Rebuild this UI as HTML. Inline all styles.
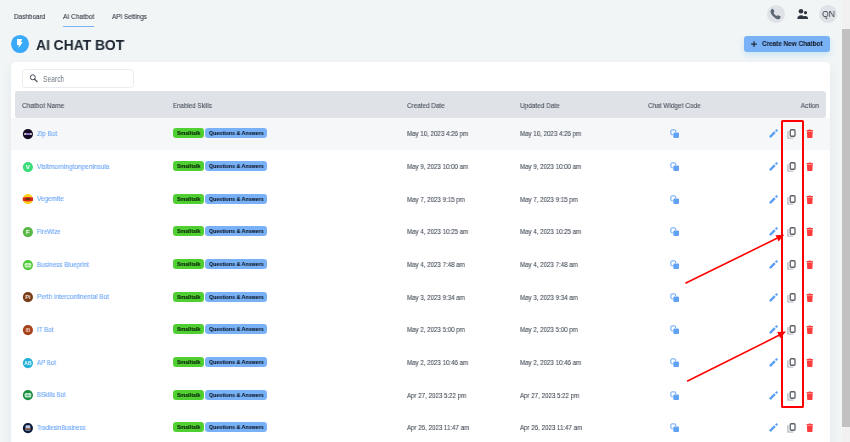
<!DOCTYPE html>
<html><head><meta charset="utf-8"><style>
html,body{margin:0;padding:0;width:850px;height:442px;overflow:hidden;background:#f2f5f6}
body{position:relative;font-family:"Liberation Sans", sans-serif}
.t{position:absolute;white-space:nowrap;will-change:transform}
svg{display:block}
</style></head><body>
<div class="t" style="left:13.60px;top:12px;font-size:7.413px;line-height:9px;color:#2f3742;font-weight:400;transform:scaleX(0.8604);transform-origin:left center;-webkit-text-stroke:0.1px currentColor;">Dashboard</div>
<div class="t" style="left:62.90px;top:12px;font-size:7.413px;line-height:9px;color:#2f3742;font-weight:400;transform:scaleX(0.8936);transform-origin:left center;-webkit-text-stroke:0.1px currentColor;">AI Chatbot</div>
<div style="position:absolute;left:62.9px;top:26px;width:31.3px;height:1.2px;background:#7fb2f5"></div>
<div class="t" style="left:112.20px;top:12px;font-size:7.413px;line-height:9px;color:#2f3742;font-weight:400;transform:scaleX(0.8556);transform-origin:left center;-webkit-text-stroke:0.1px currentColor;">API Settings</div>
<div style="position:absolute;left:11px;top:35px;width:17.9px;height:17.9px;border-radius:50%;background:#38aaf8"></div>
<svg style="position:absolute;left:11px;top:35px" width="18" height="18" viewBox="0 0 18 18"><path d="M6 4.1 L11.2 4.1 L10.0 7.1 L11.8 7.1 L7.3 13.4 L8.2 10.2 L6 10.2 Z" fill="#fff"/></svg>
<div class="t" style="left:36.10px;top:37px;font-size:14.390px;line-height:16px;color:#1b2430;font-weight:700;transform:scaleX(0.9634);transform-origin:left center;">AI CHAT BOT</div>
<div style="position:absolute;left:767px;top:5.4px;width:17.8px;height:17.6px;border-radius:50%;background:#dfe2e6"></div>
<svg style="position:absolute;left:767px;top:5.2px" width="18" height="18" viewBox="0 0 18 18"><path d="M4.6 4.2 C5.2 3.6 5.9 3.7 6.3 4.3 L7.2 5.8 C7.5 6.3 7.4 6.8 7 7.2 L6.5 7.7 C7.1 9 8.4 10.4 9.8 11.1 L10.3 10.6 C10.7 10.2 11.2 10.1 11.7 10.4 L13.2 11.3 C13.8 11.7 13.9 12.4 13.3 13 L12.6 13.7 C11.9 14.4 10.8 14.5 9.6 13.9 C7.4 12.8 5 10.4 3.9 8.2 C3.3 7 3.4 5.7 4.1 4.9 Z" fill="#5b6874"/></svg>
<svg style="position:absolute;left:796px;top:8px" width="13" height="12" viewBox="0 0 13 12"><circle cx="5" cy="3.3" r="2.3" fill="#2d3640"/><circle cx="9.5" cy="4.7" r="1.6" fill="#2d3640"/><path d="M1.3 10.9 C1.3 8.5 2.8 7.3 5 7.3 C7.2 7.3 8.7 8.5 8.7 10.9 Z" fill="#2d3640"/><path d="M7.6 8.4 C8.2 8.1 8.8 8 9.5 8 C11 8 12.1 9 12.1 10.9 L8 10.9 Z" fill="#2d3640"/></svg>
<div style="position:absolute;left:819.1px;top:5px;width:17.9px;height:17.9px;border-radius:50%;background:#dfe2e6"></div>
<div class="t" style="left:821.50px;top:8px;font-size:9.593px;line-height:11px;color:#3a3e45;font-weight:400;transform:scaleX(0.8895);transform-origin:left center;">QN</div>
<div style="position:absolute;left:842px;top:0;width:8px;height:442px;background:#f1f1f1"></div>
<div style="position:absolute;left:842px;top:28.6px;width:8px;height:398px;background:#c1c1c1"></div>
<div style="position:absolute;left:744.3px;top:35.9px;width:85.6px;height:16px;border-radius:3px;background:#78b1f6;box-shadow:0 3px 6px rgba(90,190,250,0.28)"></div>
<svg style="position:absolute;left:749px;top:40px" width="10" height="9" viewBox="0 0 10 9"><path d="M2.1 4.1 L7.9 4.1 M5 1.2 L5 7" stroke="#1f2937" stroke-width="1.2"/></svg>
<div class="t" style="left:762.40px;top:39px;font-size:7.994px;line-height:9px;color:#1a2230;font-weight:700;transform:scaleX(0.7978);transform-origin:left center;-webkit-text-stroke:0.12px #1a2230;">Create New Chatbot</div>
<div style="position:absolute;left:10.9px;top:62.2px;width:818.9px;height:420px;border-radius:5px;background:#fff;box-shadow:0 6px 12px rgba(20,50,80,0.07)"></div>
<div style="position:absolute;left:22.3px;top:69.4px;width:111.4px;height:18.2px;box-sizing:border-box;border:1px solid #eaecef;border-radius:3.5px;background:#fff"></div>
<svg style="position:absolute;left:28px;top:73px" width="12" height="12" viewBox="0 0 12 12"><circle cx="4.8" cy="4.3" r="2.5" fill="none" stroke="#464e58" stroke-width="1.0"/><path d="M6.6 6.2 L9.1 8.6" stroke="#464e58" stroke-width="1.3" stroke-linecap="round"/></svg>
<div class="t" style="left:42.90px;top:75px;font-size:8.140px;line-height:9px;color:#6f7782;font-weight:400;transform:scaleX(0.8220);transform-origin:left center;">Search</div>
<div style="position:absolute;left:14.8px;top:91px;width:811.5px;height:26.7px;border-radius:3px;background:#dfe2e6"></div>
<div class="t" style="left:21.90px;top:101px;font-size:7.267px;line-height:9px;color:#474f5b;font-weight:400;transform:scaleX(0.9027);transform-origin:left center;-webkit-text-stroke:0.1px currentColor;">Chatbot Name</div>
<div class="t" style="left:172.90px;top:101px;font-size:7.267px;line-height:9px;color:#474f5b;font-weight:400;transform:scaleX(0.8522);transform-origin:left center;-webkit-text-stroke:0.1px currentColor;">Enabled Skills</div>
<div class="t" style="left:406.60px;top:101px;font-size:7.267px;line-height:9px;color:#474f5b;font-weight:400;transform:scaleX(0.8745);transform-origin:left center;-webkit-text-stroke:0.1px currentColor;">Created Date</div>
<div class="t" style="left:520.00px;top:101px;font-size:7.267px;line-height:9px;color:#474f5b;font-weight:400;transform:scaleX(0.8875);transform-origin:left center;-webkit-text-stroke:0.1px currentColor;">Updated Date</div>
<div class="t" style="left:648.20px;top:101px;font-size:7.267px;line-height:9px;color:#474f5b;font-weight:400;transform:scaleX(0.8875);transform-origin:left center;-webkit-text-stroke:0.1px currentColor;">Chat Widget Code</div>
<div class="t" style="right:31.20px;top:101px;font-size:7.267px;line-height:9px;color:#474f5b;font-weight:400;transform:scaleX(0.9159);transform-origin:right center;-webkit-text-stroke:0.1px currentColor;">Action</div>
<div style="position:absolute;left:11px;top:117.7px;width:818.8px;height:32.67px;background:#f5f7f8"></div>
<svg style="position:absolute;left:20px;top:126.03px" width="16" height="16" viewBox="0 0 16 16"><circle cx="7.9" cy="8.1" r="5.1" fill="#160a24"/><rect x="4.2" y="7.1" width="2.4" height="1.9" fill="#d5cfdc"/><rect x="6.9" y="7.0" width="2.3" height="2" fill="#8f6ff2"/><rect x="9.5" y="7.1" width="2.3" height="1.9" fill="#d5cfdc"/></svg>
<div class="t" style="left:37.40px;top:130px;font-size:6.977px;line-height:7px;color:#6aa5f6;font-weight:400;transform:scaleX(0.9094);transform-origin:left center;-webkit-text-stroke:0.1px currentColor;">Zip Bot</div>
<div style="position:absolute;left:173px;top:128.34px;width:30.5px;height:10.1px;border-radius:3.2px;background:#50cf32"></div>
<div class="t" style="left:176.50px;top:129px;font-size:6.105px;line-height:7px;color:#0b220b;font-weight:700;transform:scaleX(0.8767);transform-origin:left center;-webkit-text-stroke:0.08px #0b220b;">Smalltalk</div>
<div style="position:absolute;left:205.3px;top:128.34px;width:62.1px;height:10.1px;border-radius:3.2px;background:#78b1f6"></div>
<div class="t" style="left:209.00px;top:129px;font-size:6.105px;line-height:7px;color:#0d1524;font-weight:700;transform:scaleX(0.8732);transform-origin:left center;-webkit-text-stroke:0.08px #0d1524;">Questions &amp; Answers</div>
<div class="t" style="left:406.80px;top:129px;font-size:7.267px;line-height:9px;color:#434b57;font-weight:400;transform:scaleX(0.8494);transform-origin:left center;-webkit-text-stroke:0.1px currentColor;">May 10, 2023 4:26 pm</div>
<div class="t" style="left:520.00px;top:129px;font-size:7.267px;line-height:9px;color:#434b57;font-weight:400;transform:scaleX(0.8494);transform-origin:left center;-webkit-text-stroke:0.1px currentColor;">May 10, 2023 4:26 pm</div>
<div style="position:absolute;left:667px;top:125.30px"><svg width="16" height="16" viewBox="0 0 16 16"><rect x="3.9" y="4.9" width="4.8" height="4.9" rx="0.9" fill="none" stroke="#62a2f5" stroke-width="1.0"/><rect x="5.8" y="7.1" width="6.6" height="6.3" rx="1.4" fill="#fff"/><rect x="6.3" y="7.6" width="5.7" height="5.4" rx="1.1" fill="#62a2f5"/></svg></div>
<div style="position:absolute;left:766px;top:125.30px"><svg width="16" height="16" viewBox="0 0 16 16"><path d="M3.9 12.1 L8.9 7.1" stroke="#5b9ef5" stroke-width="2.3"/><path d="M9.7 6.3 L11.3 4.7" stroke="#5b9ef5" stroke-width="2.1"/></svg></div>
<div style="position:absolute;left:784px;top:125.30px"><svg width="16" height="16" viewBox="0 0 16 16"><rect x="3.1" y="6" width="6.4" height="7.8" rx="0.9" fill="#c2c5cb"/><rect x="4.6" y="3.5" width="7.7" height="9" rx="1.6" fill="#f7f8fa"/><rect x="6.25" y="4.75" width="4.75" height="6.5" rx="1.1" fill="#fff" stroke="#5c6168" stroke-width="1.3"/></svg></div>
<div style="position:absolute;left:802px;top:125.30px"><svg width="16" height="16" viewBox="0 0 16 16"><rect x="6.6" y="4.5" width="2.3" height="0.9" rx="0.3" fill="#ff3d3d"/><path d="M4.6 5.6 Q4.6 5.1 5.1 5.1 L10.5 5.1 Q11 5.1 11 5.6 L11 6.4 L4.6 6.4 Z" fill="#ff3d3d"/><path d="M4.9 6.7 L10.7 6.7 L10.4 12.4 Q10.3 12.9 9.8 12.9 L5.8 12.9 Q5.3 12.9 5.2 12.4 Z" fill="#ff3d3d"/></svg></div>
<svg style="position:absolute;left:20px;top:158.71px" width="16" height="16" viewBox="0 0 16 16"><circle cx="7.9" cy="8.1" r="5.1" fill="#3edd7c"/><text x="7.9" y="10.3" text-anchor="middle" font-family="Liberation Sans" font-weight="700" font-size="6.2" fill="#fff">V</text></svg>
<div class="t" style="left:37.40px;top:163px;font-size:6.977px;line-height:7px;color:#6aa5f6;font-weight:400;transform:scaleX(0.9303);transform-origin:left center;-webkit-text-stroke:0.1px currentColor;">Visitmorningtonpeninsula</div>
<div style="position:absolute;left:173px;top:161.01px;width:30.5px;height:10.1px;border-radius:3.2px;background:#50cf32"></div>
<div class="t" style="left:176.50px;top:162px;font-size:6.105px;line-height:7px;color:#0b220b;font-weight:700;transform:scaleX(0.8767);transform-origin:left center;-webkit-text-stroke:0.08px #0b220b;">Smalltalk</div>
<div style="position:absolute;left:205.3px;top:161.01px;width:62.1px;height:10.1px;border-radius:3.2px;background:#78b1f6"></div>
<div class="t" style="left:209.00px;top:162px;font-size:6.105px;line-height:7px;color:#0d1524;font-weight:700;transform:scaleX(0.8732);transform-origin:left center;-webkit-text-stroke:0.08px #0d1524;">Questions &amp; Answers</div>
<div class="t" style="left:406.80px;top:162px;font-size:7.267px;line-height:9px;color:#434b57;font-weight:400;transform:scaleX(0.8494);transform-origin:left center;-webkit-text-stroke:0.1px currentColor;">May 9, 2023 10:00 am</div>
<div class="t" style="left:520.00px;top:162px;font-size:7.267px;line-height:9px;color:#434b57;font-weight:400;transform:scaleX(0.8494);transform-origin:left center;-webkit-text-stroke:0.1px currentColor;">May 9, 2023 10:00 am</div>
<div style="position:absolute;left:667px;top:157.98px"><svg width="16" height="16" viewBox="0 0 16 16"><rect x="3.9" y="4.9" width="4.8" height="4.9" rx="0.9" fill="none" stroke="#62a2f5" stroke-width="1.0"/><rect x="5.8" y="7.1" width="6.6" height="6.3" rx="1.4" fill="#fff"/><rect x="6.3" y="7.6" width="5.7" height="5.4" rx="1.1" fill="#62a2f5"/></svg></div>
<div style="position:absolute;left:766px;top:157.98px"><svg width="16" height="16" viewBox="0 0 16 16"><path d="M3.9 12.1 L8.9 7.1" stroke="#5b9ef5" stroke-width="2.3"/><path d="M9.7 6.3 L11.3 4.7" stroke="#5b9ef5" stroke-width="2.1"/></svg></div>
<div style="position:absolute;left:784px;top:157.98px"><svg width="16" height="16" viewBox="0 0 16 16"><rect x="3.1" y="6" width="6.4" height="7.8" rx="0.9" fill="#c2c5cb"/><rect x="4.6" y="3.5" width="7.7" height="9" rx="1.6" fill="#f7f8fa"/><rect x="6.25" y="4.75" width="4.75" height="6.5" rx="1.1" fill="#fff" stroke="#5c6168" stroke-width="1.3"/></svg></div>
<div style="position:absolute;left:802px;top:157.98px"><svg width="16" height="16" viewBox="0 0 16 16"><rect x="6.6" y="4.5" width="2.3" height="0.9" rx="0.3" fill="#ff3d3d"/><path d="M4.6 5.6 Q4.6 5.1 5.1 5.1 L10.5 5.1 Q11 5.1 11 5.6 L11 6.4 L4.6 6.4 Z" fill="#ff3d3d"/><path d="M4.9 6.7 L10.7 6.7 L10.4 12.4 Q10.3 12.9 9.8 12.9 L5.8 12.9 Q5.3 12.9 5.2 12.4 Z" fill="#ff3d3d"/></svg></div>
<svg style="position:absolute;left:20px;top:191.38px" width="16" height="16" viewBox="0 0 16 16"><circle cx="7.9" cy="8.1" r="5.1" fill="#f8d21c"/><path d="M2.8 6.6 Q7.9 5.2 13 6.6 L13 9.8 Q7.9 11.2 2.8 9.8 Z" fill="#e0261c"/><rect x="5.3" y="7.2" width="5.2" height="1.6" rx="0.6" fill="#5a3a1a"/></svg>
<div class="t" style="left:37.40px;top:195px;font-size:6.977px;line-height:7px;color:#6aa5f6;font-weight:400;transform:scaleX(0.9179);transform-origin:left center;-webkit-text-stroke:0.1px currentColor;">Vegemite</div>
<div style="position:absolute;left:173px;top:193.68px;width:30.5px;height:10.1px;border-radius:3.2px;background:#50cf32"></div>
<div class="t" style="left:176.50px;top:195px;font-size:6.105px;line-height:7px;color:#0b220b;font-weight:700;transform:scaleX(0.8767);transform-origin:left center;-webkit-text-stroke:0.08px #0b220b;">Smalltalk</div>
<div style="position:absolute;left:205.3px;top:193.68px;width:62.1px;height:10.1px;border-radius:3.2px;background:#78b1f6"></div>
<div class="t" style="left:209.00px;top:195px;font-size:6.105px;line-height:7px;color:#0d1524;font-weight:700;transform:scaleX(0.8732);transform-origin:left center;-webkit-text-stroke:0.08px #0d1524;">Questions &amp; Answers</div>
<div class="t" style="left:406.80px;top:195px;font-size:7.267px;line-height:9px;color:#434b57;font-weight:400;transform:scaleX(0.8494);transform-origin:left center;-webkit-text-stroke:0.1px currentColor;">May 7, 2023 9:15 pm</div>
<div class="t" style="left:520.00px;top:195px;font-size:7.267px;line-height:9px;color:#434b57;font-weight:400;transform:scaleX(0.8494);transform-origin:left center;-webkit-text-stroke:0.1px currentColor;">May 7, 2023 9:15 pm</div>
<div style="position:absolute;left:667px;top:190.65px"><svg width="16" height="16" viewBox="0 0 16 16"><rect x="3.9" y="4.9" width="4.8" height="4.9" rx="0.9" fill="none" stroke="#62a2f5" stroke-width="1.0"/><rect x="5.8" y="7.1" width="6.6" height="6.3" rx="1.4" fill="#fff"/><rect x="6.3" y="7.6" width="5.7" height="5.4" rx="1.1" fill="#62a2f5"/></svg></div>
<div style="position:absolute;left:766px;top:190.65px"><svg width="16" height="16" viewBox="0 0 16 16"><path d="M3.9 12.1 L8.9 7.1" stroke="#5b9ef5" stroke-width="2.3"/><path d="M9.7 6.3 L11.3 4.7" stroke="#5b9ef5" stroke-width="2.1"/></svg></div>
<div style="position:absolute;left:784px;top:190.65px"><svg width="16" height="16" viewBox="0 0 16 16"><rect x="3.1" y="6" width="6.4" height="7.8" rx="0.9" fill="#c2c5cb"/><rect x="4.6" y="3.5" width="7.7" height="9" rx="1.6" fill="#f7f8fa"/><rect x="6.25" y="4.75" width="4.75" height="6.5" rx="1.1" fill="#fff" stroke="#5c6168" stroke-width="1.3"/></svg></div>
<div style="position:absolute;left:802px;top:190.65px"><svg width="16" height="16" viewBox="0 0 16 16"><rect x="6.6" y="4.5" width="2.3" height="0.9" rx="0.3" fill="#ff3d3d"/><path d="M4.6 5.6 Q4.6 5.1 5.1 5.1 L10.5 5.1 Q11 5.1 11 5.6 L11 6.4 L4.6 6.4 Z" fill="#ff3d3d"/><path d="M4.9 6.7 L10.7 6.7 L10.4 12.4 Q10.3 12.9 9.8 12.9 L5.8 12.9 Q5.3 12.9 5.2 12.4 Z" fill="#ff3d3d"/></svg></div>
<svg style="position:absolute;left:20px;top:224.05px" width="16" height="16" viewBox="0 0 16 16"><circle cx="7.9" cy="8.1" r="5.1" fill="#58b946"/><text x="7.9" y="10.3" text-anchor="middle" font-family="Liberation Sans" font-weight="700" font-size="6.2" fill="#fff">F</text></svg>
<div class="t" style="left:37.40px;top:228px;font-size:6.977px;line-height:7px;color:#6aa5f6;font-weight:400;transform:scaleX(0.8576);transform-origin:left center;-webkit-text-stroke:0.1px currentColor;">FireWize</div>
<div style="position:absolute;left:173px;top:226.35px;width:30.5px;height:10.1px;border-radius:3.2px;background:#50cf32"></div>
<div class="t" style="left:176.50px;top:227px;font-size:6.105px;line-height:7px;color:#0b220b;font-weight:700;transform:scaleX(0.8767);transform-origin:left center;-webkit-text-stroke:0.08px #0b220b;">Smalltalk</div>
<div style="position:absolute;left:205.3px;top:226.35px;width:62.1px;height:10.1px;border-radius:3.2px;background:#78b1f6"></div>
<div class="t" style="left:209.00px;top:227px;font-size:6.105px;line-height:7px;color:#0d1524;font-weight:700;transform:scaleX(0.8732);transform-origin:left center;-webkit-text-stroke:0.08px #0d1524;">Questions &amp; Answers</div>
<div class="t" style="left:406.80px;top:227px;font-size:7.267px;line-height:9px;color:#434b57;font-weight:400;transform:scaleX(0.8494);transform-origin:left center;-webkit-text-stroke:0.1px currentColor;">May 4, 2023 10:25 am</div>
<div class="t" style="left:520.00px;top:227px;font-size:7.267px;line-height:9px;color:#434b57;font-weight:400;transform:scaleX(0.8494);transform-origin:left center;-webkit-text-stroke:0.1px currentColor;">May 4, 2023 10:25 am</div>
<div style="position:absolute;left:667px;top:223.32px"><svg width="16" height="16" viewBox="0 0 16 16"><rect x="3.9" y="4.9" width="4.8" height="4.9" rx="0.9" fill="none" stroke="#62a2f5" stroke-width="1.0"/><rect x="5.8" y="7.1" width="6.6" height="6.3" rx="1.4" fill="#fff"/><rect x="6.3" y="7.6" width="5.7" height="5.4" rx="1.1" fill="#62a2f5"/></svg></div>
<div style="position:absolute;left:766px;top:223.32px"><svg width="16" height="16" viewBox="0 0 16 16"><path d="M3.9 12.1 L8.9 7.1" stroke="#5b9ef5" stroke-width="2.3"/><path d="M9.7 6.3 L11.3 4.7" stroke="#5b9ef5" stroke-width="2.1"/></svg></div>
<div style="position:absolute;left:784px;top:223.32px"><svg width="16" height="16" viewBox="0 0 16 16"><rect x="3.1" y="6" width="6.4" height="7.8" rx="0.9" fill="#c2c5cb"/><rect x="4.6" y="3.5" width="7.7" height="9" rx="1.6" fill="#f7f8fa"/><rect x="6.25" y="4.75" width="4.75" height="6.5" rx="1.1" fill="#fff" stroke="#5c6168" stroke-width="1.3"/></svg></div>
<div style="position:absolute;left:802px;top:223.32px"><svg width="16" height="16" viewBox="0 0 16 16"><rect x="6.6" y="4.5" width="2.3" height="0.9" rx="0.3" fill="#ff3d3d"/><path d="M4.6 5.6 Q4.6 5.1 5.1 5.1 L10.5 5.1 Q11 5.1 11 5.6 L11 6.4 L4.6 6.4 Z" fill="#ff3d3d"/><path d="M4.9 6.7 L10.7 6.7 L10.4 12.4 Q10.3 12.9 9.8 12.9 L5.8 12.9 Q5.3 12.9 5.2 12.4 Z" fill="#ff3d3d"/></svg></div>
<svg style="position:absolute;left:20px;top:256.71px" width="16" height="16" viewBox="0 0 16 16"><circle cx="7.9" cy="8.1" r="5.1" fill="#4fcb3a"/><rect x="4.6" y="6.0" width="6.7" height="4.4" rx="1.6" fill="#d9f5d2"/><rect x="5.2" y="7.9" width="5.5" height="0.6" fill="#6fcf5a"/><rect x="7.65" y="6.2" width="0.6" height="4" fill="#6fcf5a"/></svg>
<div class="t" style="left:37.40px;top:261px;font-size:6.977px;line-height:7px;color:#6aa5f6;font-weight:400;transform:scaleX(0.8999);transform-origin:left center;-webkit-text-stroke:0.1px currentColor;">Business Blueprint</div>
<div style="position:absolute;left:173px;top:259.01px;width:30.5px;height:10.1px;border-radius:3.2px;background:#50cf32"></div>
<div class="t" style="left:176.50px;top:260px;font-size:6.105px;line-height:7px;color:#0b220b;font-weight:700;transform:scaleX(0.8767);transform-origin:left center;-webkit-text-stroke:0.08px #0b220b;">Smalltalk</div>
<div style="position:absolute;left:205.3px;top:259.01px;width:62.1px;height:10.1px;border-radius:3.2px;background:#78b1f6"></div>
<div class="t" style="left:209.00px;top:260px;font-size:6.105px;line-height:7px;color:#0d1524;font-weight:700;transform:scaleX(0.8732);transform-origin:left center;-webkit-text-stroke:0.08px #0d1524;">Questions &amp; Answers</div>
<div class="t" style="left:406.80px;top:260px;font-size:7.267px;line-height:9px;color:#434b57;font-weight:400;transform:scaleX(0.8494);transform-origin:left center;-webkit-text-stroke:0.1px currentColor;">May 4, 2023 7:48 am</div>
<div class="t" style="left:520.00px;top:260px;font-size:7.267px;line-height:9px;color:#434b57;font-weight:400;transform:scaleX(0.8494);transform-origin:left center;-webkit-text-stroke:0.1px currentColor;">May 4, 2023 7:48 am</div>
<div style="position:absolute;left:667px;top:255.98px"><svg width="16" height="16" viewBox="0 0 16 16"><rect x="3.9" y="4.9" width="4.8" height="4.9" rx="0.9" fill="none" stroke="#62a2f5" stroke-width="1.0"/><rect x="5.8" y="7.1" width="6.6" height="6.3" rx="1.4" fill="#fff"/><rect x="6.3" y="7.6" width="5.7" height="5.4" rx="1.1" fill="#62a2f5"/></svg></div>
<div style="position:absolute;left:766px;top:255.98px"><svg width="16" height="16" viewBox="0 0 16 16"><path d="M3.9 12.1 L8.9 7.1" stroke="#5b9ef5" stroke-width="2.3"/><path d="M9.7 6.3 L11.3 4.7" stroke="#5b9ef5" stroke-width="2.1"/></svg></div>
<div style="position:absolute;left:784px;top:255.98px"><svg width="16" height="16" viewBox="0 0 16 16"><rect x="3.1" y="6" width="6.4" height="7.8" rx="0.9" fill="#c2c5cb"/><rect x="4.6" y="3.5" width="7.7" height="9" rx="1.6" fill="#f7f8fa"/><rect x="6.25" y="4.75" width="4.75" height="6.5" rx="1.1" fill="#fff" stroke="#5c6168" stroke-width="1.3"/></svg></div>
<div style="position:absolute;left:802px;top:255.98px"><svg width="16" height="16" viewBox="0 0 16 16"><rect x="6.6" y="4.5" width="2.3" height="0.9" rx="0.3" fill="#ff3d3d"/><path d="M4.6 5.6 Q4.6 5.1 5.1 5.1 L10.5 5.1 Q11 5.1 11 5.6 L11 6.4 L4.6 6.4 Z" fill="#ff3d3d"/><path d="M4.9 6.7 L10.7 6.7 L10.4 12.4 Q10.3 12.9 9.8 12.9 L5.8 12.9 Q5.3 12.9 5.2 12.4 Z" fill="#ff3d3d"/></svg></div>
<svg style="position:absolute;left:20px;top:289.38px" width="16" height="16" viewBox="0 0 16 16"><circle cx="7.9" cy="8.1" r="5.1" fill="#7b3d15"/><text x="7.9" y="10.1" text-anchor="middle" font-family="Liberation Sans" font-weight="700" font-size="5.6" fill="#f6ebe3">Pi</text></svg>
<div class="t" style="left:37.40px;top:293px;font-size:6.977px;line-height:7px;color:#6aa5f6;font-weight:400;transform:scaleX(0.9190);transform-origin:left center;-webkit-text-stroke:0.1px currentColor;">Perth intercontinental Bot</div>
<div style="position:absolute;left:173px;top:291.69px;width:30.5px;height:10.1px;border-radius:3.2px;background:#50cf32"></div>
<div class="t" style="left:176.50px;top:293px;font-size:6.105px;line-height:7px;color:#0b220b;font-weight:700;transform:scaleX(0.8767);transform-origin:left center;-webkit-text-stroke:0.08px #0b220b;">Smalltalk</div>
<div style="position:absolute;left:205.3px;top:291.69px;width:62.1px;height:10.1px;border-radius:3.2px;background:#78b1f6"></div>
<div class="t" style="left:209.00px;top:293px;font-size:6.105px;line-height:7px;color:#0d1524;font-weight:700;transform:scaleX(0.8732);transform-origin:left center;-webkit-text-stroke:0.08px #0d1524;">Questions &amp; Answers</div>
<div class="t" style="left:406.80px;top:293px;font-size:7.267px;line-height:9px;color:#434b57;font-weight:400;transform:scaleX(0.8494);transform-origin:left center;-webkit-text-stroke:0.1px currentColor;">May 3, 2023 9:34 am</div>
<div class="t" style="left:520.00px;top:293px;font-size:7.267px;line-height:9px;color:#434b57;font-weight:400;transform:scaleX(0.8494);transform-origin:left center;-webkit-text-stroke:0.1px currentColor;">May 3, 2023 9:34 am</div>
<div style="position:absolute;left:667px;top:288.65px"><svg width="16" height="16" viewBox="0 0 16 16"><rect x="3.9" y="4.9" width="4.8" height="4.9" rx="0.9" fill="none" stroke="#62a2f5" stroke-width="1.0"/><rect x="5.8" y="7.1" width="6.6" height="6.3" rx="1.4" fill="#fff"/><rect x="6.3" y="7.6" width="5.7" height="5.4" rx="1.1" fill="#62a2f5"/></svg></div>
<div style="position:absolute;left:766px;top:288.65px"><svg width="16" height="16" viewBox="0 0 16 16"><path d="M3.9 12.1 L8.9 7.1" stroke="#5b9ef5" stroke-width="2.3"/><path d="M9.7 6.3 L11.3 4.7" stroke="#5b9ef5" stroke-width="2.1"/></svg></div>
<div style="position:absolute;left:784px;top:288.65px"><svg width="16" height="16" viewBox="0 0 16 16"><rect x="3.1" y="6" width="6.4" height="7.8" rx="0.9" fill="#c2c5cb"/><rect x="4.6" y="3.5" width="7.7" height="9" rx="1.6" fill="#f7f8fa"/><rect x="6.25" y="4.75" width="4.75" height="6.5" rx="1.1" fill="#fff" stroke="#5c6168" stroke-width="1.3"/></svg></div>
<div style="position:absolute;left:802px;top:288.65px"><svg width="16" height="16" viewBox="0 0 16 16"><rect x="6.6" y="4.5" width="2.3" height="0.9" rx="0.3" fill="#ff3d3d"/><path d="M4.6 5.6 Q4.6 5.1 5.1 5.1 L10.5 5.1 Q11 5.1 11 5.6 L11 6.4 L4.6 6.4 Z" fill="#ff3d3d"/><path d="M4.9 6.7 L10.7 6.7 L10.4 12.4 Q10.3 12.9 9.8 12.9 L5.8 12.9 Q5.3 12.9 5.2 12.4 Z" fill="#ff3d3d"/></svg></div>
<svg style="position:absolute;left:20px;top:322.06px" width="16" height="16" viewBox="0 0 16 16"><circle cx="7.9" cy="8.1" r="5.1" fill="#a7411c"/><text x="7.9" y="9.9" text-anchor="middle" font-family="Liberation Sans" font-weight="700" font-size="5.0" fill="#efc4b2">IB</text></svg>
<div class="t" style="left:37.40px;top:326px;font-size:6.977px;line-height:7px;color:#6aa5f6;font-weight:400;transform:scaleX(0.8872);transform-origin:left center;-webkit-text-stroke:0.1px currentColor;">IT Bot</div>
<div style="position:absolute;left:173px;top:324.36px;width:30.5px;height:10.1px;border-radius:3.2px;background:#50cf32"></div>
<div class="t" style="left:176.50px;top:325px;font-size:6.105px;line-height:7px;color:#0b220b;font-weight:700;transform:scaleX(0.8767);transform-origin:left center;-webkit-text-stroke:0.08px #0b220b;">Smalltalk</div>
<div style="position:absolute;left:205.3px;top:324.36px;width:62.1px;height:10.1px;border-radius:3.2px;background:#78b1f6"></div>
<div class="t" style="left:209.00px;top:325px;font-size:6.105px;line-height:7px;color:#0d1524;font-weight:700;transform:scaleX(0.8732);transform-origin:left center;-webkit-text-stroke:0.08px #0d1524;">Questions &amp; Answers</div>
<div class="t" style="left:406.80px;top:325px;font-size:7.267px;line-height:9px;color:#434b57;font-weight:400;transform:scaleX(0.8494);transform-origin:left center;-webkit-text-stroke:0.1px currentColor;">May 2, 2023 5:00 pm</div>
<div class="t" style="left:520.00px;top:325px;font-size:7.267px;line-height:9px;color:#434b57;font-weight:400;transform:scaleX(0.8494);transform-origin:left center;-webkit-text-stroke:0.1px currentColor;">May 2, 2023 5:00 pm</div>
<div style="position:absolute;left:667px;top:321.32px"><svg width="16" height="16" viewBox="0 0 16 16"><rect x="3.9" y="4.9" width="4.8" height="4.9" rx="0.9" fill="none" stroke="#62a2f5" stroke-width="1.0"/><rect x="5.8" y="7.1" width="6.6" height="6.3" rx="1.4" fill="#fff"/><rect x="6.3" y="7.6" width="5.7" height="5.4" rx="1.1" fill="#62a2f5"/></svg></div>
<div style="position:absolute;left:766px;top:321.32px"><svg width="16" height="16" viewBox="0 0 16 16"><path d="M3.9 12.1 L8.9 7.1" stroke="#5b9ef5" stroke-width="2.3"/><path d="M9.7 6.3 L11.3 4.7" stroke="#5b9ef5" stroke-width="2.1"/></svg></div>
<div style="position:absolute;left:784px;top:321.32px"><svg width="16" height="16" viewBox="0 0 16 16"><rect x="3.1" y="6" width="6.4" height="7.8" rx="0.9" fill="#c2c5cb"/><rect x="4.6" y="3.5" width="7.7" height="9" rx="1.6" fill="#f7f8fa"/><rect x="6.25" y="4.75" width="4.75" height="6.5" rx="1.1" fill="#fff" stroke="#5c6168" stroke-width="1.3"/></svg></div>
<div style="position:absolute;left:802px;top:321.32px"><svg width="16" height="16" viewBox="0 0 16 16"><rect x="6.6" y="4.5" width="2.3" height="0.9" rx="0.3" fill="#ff3d3d"/><path d="M4.6 5.6 Q4.6 5.1 5.1 5.1 L10.5 5.1 Q11 5.1 11 5.6 L11 6.4 L4.6 6.4 Z" fill="#ff3d3d"/><path d="M4.9 6.7 L10.7 6.7 L10.4 12.4 Q10.3 12.9 9.8 12.9 L5.8 12.9 Q5.3 12.9 5.2 12.4 Z" fill="#ff3d3d"/></svg></div>
<svg style="position:absolute;left:20px;top:354.72px" width="16" height="16" viewBox="0 0 16 16"><circle cx="7.9" cy="8.1" r="5.1" fill="#22b0d6"/><text x="7.9" y="9.9" text-anchor="middle" font-family="Liberation Sans" font-weight="700" font-size="5.0" fill="#f2fbff">AB</text></svg>
<div class="t" style="left:37.40px;top:359px;font-size:6.977px;line-height:7px;color:#6aa5f6;font-weight:400;transform:scaleX(0.8800);transform-origin:left center;-webkit-text-stroke:0.1px currentColor;">AP Bot</div>
<div style="position:absolute;left:173px;top:357.02px;width:30.5px;height:10.1px;border-radius:3.2px;background:#50cf32"></div>
<div class="t" style="left:176.50px;top:358px;font-size:6.105px;line-height:7px;color:#0b220b;font-weight:700;transform:scaleX(0.8767);transform-origin:left center;-webkit-text-stroke:0.08px #0b220b;">Smalltalk</div>
<div style="position:absolute;left:205.3px;top:357.02px;width:62.1px;height:10.1px;border-radius:3.2px;background:#78b1f6"></div>
<div class="t" style="left:209.00px;top:358px;font-size:6.105px;line-height:7px;color:#0d1524;font-weight:700;transform:scaleX(0.8732);transform-origin:left center;-webkit-text-stroke:0.08px #0d1524;">Questions &amp; Answers</div>
<div class="t" style="left:406.80px;top:358px;font-size:7.267px;line-height:9px;color:#434b57;font-weight:400;transform:scaleX(0.8494);transform-origin:left center;-webkit-text-stroke:0.1px currentColor;">May 2, 2023 10:46 am</div>
<div class="t" style="left:520.00px;top:358px;font-size:7.267px;line-height:9px;color:#434b57;font-weight:400;transform:scaleX(0.8494);transform-origin:left center;-webkit-text-stroke:0.1px currentColor;">May 2, 2023 10:46 am</div>
<div style="position:absolute;left:667px;top:353.99px"><svg width="16" height="16" viewBox="0 0 16 16"><rect x="3.9" y="4.9" width="4.8" height="4.9" rx="0.9" fill="none" stroke="#62a2f5" stroke-width="1.0"/><rect x="5.8" y="7.1" width="6.6" height="6.3" rx="1.4" fill="#fff"/><rect x="6.3" y="7.6" width="5.7" height="5.4" rx="1.1" fill="#62a2f5"/></svg></div>
<div style="position:absolute;left:766px;top:353.99px"><svg width="16" height="16" viewBox="0 0 16 16"><path d="M3.9 12.1 L8.9 7.1" stroke="#5b9ef5" stroke-width="2.3"/><path d="M9.7 6.3 L11.3 4.7" stroke="#5b9ef5" stroke-width="2.1"/></svg></div>
<div style="position:absolute;left:784px;top:353.99px"><svg width="16" height="16" viewBox="0 0 16 16"><rect x="3.1" y="6" width="6.4" height="7.8" rx="0.9" fill="#c2c5cb"/><rect x="4.6" y="3.5" width="7.7" height="9" rx="1.6" fill="#f7f8fa"/><rect x="6.25" y="4.75" width="4.75" height="6.5" rx="1.1" fill="#fff" stroke="#5c6168" stroke-width="1.3"/></svg></div>
<div style="position:absolute;left:802px;top:353.99px"><svg width="16" height="16" viewBox="0 0 16 16"><rect x="6.6" y="4.5" width="2.3" height="0.9" rx="0.3" fill="#ff3d3d"/><path d="M4.6 5.6 Q4.6 5.1 5.1 5.1 L10.5 5.1 Q11 5.1 11 5.6 L11 6.4 L4.6 6.4 Z" fill="#ff3d3d"/><path d="M4.9 6.7 L10.7 6.7 L10.4 12.4 Q10.3 12.9 9.8 12.9 L5.8 12.9 Q5.3 12.9 5.2 12.4 Z" fill="#ff3d3d"/></svg></div>
<svg style="position:absolute;left:20px;top:387.39px" width="16" height="16" viewBox="0 0 16 16"><circle cx="7.9" cy="8.1" r="5.1" fill="#1c8f40"/><rect x="4.6" y="6.0" width="6.7" height="4.4" rx="1.6" fill="#cfeedd"/><rect x="5.2" y="7.9" width="5.5" height="0.6" fill="#3fa563"/><rect x="7.65" y="6.2" width="0.6" height="4" fill="#3fa563"/></svg>
<div class="t" style="left:37.40px;top:391px;font-size:6.977px;line-height:7px;color:#6aa5f6;font-weight:400;transform:scaleX(0.8607);transform-origin:left center;-webkit-text-stroke:0.1px currentColor;">BSkills Bot</div>
<div style="position:absolute;left:173px;top:389.69px;width:30.5px;height:10.1px;border-radius:3.2px;background:#50cf32"></div>
<div class="t" style="left:176.50px;top:391px;font-size:6.105px;line-height:7px;color:#0b220b;font-weight:700;transform:scaleX(0.8767);transform-origin:left center;-webkit-text-stroke:0.08px #0b220b;">Smalltalk</div>
<div style="position:absolute;left:205.3px;top:389.69px;width:62.1px;height:10.1px;border-radius:3.2px;background:#78b1f6"></div>
<div class="t" style="left:209.00px;top:391px;font-size:6.105px;line-height:7px;color:#0d1524;font-weight:700;transform:scaleX(0.8732);transform-origin:left center;-webkit-text-stroke:0.08px #0d1524;">Questions &amp; Answers</div>
<div class="t" style="left:406.80px;top:391px;font-size:7.267px;line-height:9px;color:#434b57;font-weight:400;transform:scaleX(0.8494);transform-origin:left center;-webkit-text-stroke:0.1px currentColor;">Apr 27, 2023 5:22 pm</div>
<div class="t" style="left:520.00px;top:391px;font-size:7.267px;line-height:9px;color:#434b57;font-weight:400;transform:scaleX(0.8494);transform-origin:left center;-webkit-text-stroke:0.1px currentColor;">Apr 27, 2023 5:22 pm</div>
<div style="position:absolute;left:667px;top:386.66px"><svg width="16" height="16" viewBox="0 0 16 16"><rect x="3.9" y="4.9" width="4.8" height="4.9" rx="0.9" fill="none" stroke="#62a2f5" stroke-width="1.0"/><rect x="5.8" y="7.1" width="6.6" height="6.3" rx="1.4" fill="#fff"/><rect x="6.3" y="7.6" width="5.7" height="5.4" rx="1.1" fill="#62a2f5"/></svg></div>
<div style="position:absolute;left:766px;top:386.66px"><svg width="16" height="16" viewBox="0 0 16 16"><path d="M3.9 12.1 L8.9 7.1" stroke="#5b9ef5" stroke-width="2.3"/><path d="M9.7 6.3 L11.3 4.7" stroke="#5b9ef5" stroke-width="2.1"/></svg></div>
<div style="position:absolute;left:784px;top:386.66px"><svg width="16" height="16" viewBox="0 0 16 16"><rect x="3.1" y="6" width="6.4" height="7.8" rx="0.9" fill="#c2c5cb"/><rect x="4.6" y="3.5" width="7.7" height="9" rx="1.6" fill="#f7f8fa"/><rect x="6.25" y="4.75" width="4.75" height="6.5" rx="1.1" fill="#fff" stroke="#5c6168" stroke-width="1.3"/></svg></div>
<div style="position:absolute;left:802px;top:386.66px"><svg width="16" height="16" viewBox="0 0 16 16"><rect x="6.6" y="4.5" width="2.3" height="0.9" rx="0.3" fill="#ff3d3d"/><path d="M4.6 5.6 Q4.6 5.1 5.1 5.1 L10.5 5.1 Q11 5.1 11 5.6 L11 6.4 L4.6 6.4 Z" fill="#ff3d3d"/><path d="M4.9 6.7 L10.7 6.7 L10.4 12.4 Q10.3 12.9 9.8 12.9 L5.8 12.9 Q5.3 12.9 5.2 12.4 Z" fill="#ff3d3d"/></svg></div>
<svg style="position:absolute;left:20px;top:420.06px" width="16" height="16" viewBox="0 0 16 16"><circle cx="7.9" cy="8.1" r="5.1" fill="#0b1838"/><rect x="5.5" y="5.2" width="4.8" height="3" rx="0.8" fill="#b9c8e6"/><rect x="5.0" y="8.4" width="5.8" height="1.1" fill="#c98a4e"/><rect x="5.6" y="10" width="4.6" height="0.9" fill="#6f86b4"/></svg>
<div class="t" style="left:37.40px;top:424px;font-size:6.977px;line-height:7px;color:#6aa5f6;font-weight:400;transform:scaleX(0.8547);transform-origin:left center;-webkit-text-stroke:0.1px currentColor;">TradiesinBusiness</div>
<div style="position:absolute;left:173px;top:422.37px;width:30.5px;height:10.1px;border-radius:3.2px;background:#50cf32"></div>
<div class="t" style="left:176.50px;top:423px;font-size:6.105px;line-height:7px;color:#0b220b;font-weight:700;transform:scaleX(0.8767);transform-origin:left center;-webkit-text-stroke:0.08px #0b220b;">Smalltalk</div>
<div style="position:absolute;left:205.3px;top:422.37px;width:62.1px;height:10.1px;border-radius:3.2px;background:#78b1f6"></div>
<div class="t" style="left:209.00px;top:423px;font-size:6.105px;line-height:7px;color:#0d1524;font-weight:700;transform:scaleX(0.8732);transform-origin:left center;-webkit-text-stroke:0.08px #0d1524;">Questions &amp; Answers</div>
<div class="t" style="left:406.80px;top:423px;font-size:7.267px;line-height:9px;color:#434b57;font-weight:400;transform:scaleX(0.8494);transform-origin:left center;-webkit-text-stroke:0.1px currentColor;">Apr 26, 2023 11:47 am</div>
<div class="t" style="left:520.00px;top:423px;font-size:7.267px;line-height:9px;color:#434b57;font-weight:400;transform:scaleX(0.8494);transform-origin:left center;-webkit-text-stroke:0.1px currentColor;">Apr 26, 2023 11:47 am</div>
<div style="position:absolute;left:667px;top:419.33px"><svg width="16" height="16" viewBox="0 0 16 16"><rect x="3.9" y="4.9" width="4.8" height="4.9" rx="0.9" fill="none" stroke="#62a2f5" stroke-width="1.0"/><rect x="5.8" y="7.1" width="6.6" height="6.3" rx="1.4" fill="#fff"/><rect x="6.3" y="7.6" width="5.7" height="5.4" rx="1.1" fill="#62a2f5"/></svg></div>
<div style="position:absolute;left:766px;top:419.33px"><svg width="16" height="16" viewBox="0 0 16 16"><path d="M3.9 12.1 L8.9 7.1" stroke="#5b9ef5" stroke-width="2.3"/><path d="M9.7 6.3 L11.3 4.7" stroke="#5b9ef5" stroke-width="2.1"/></svg></div>
<div style="position:absolute;left:784px;top:419.33px"><svg width="16" height="16" viewBox="0 0 16 16"><rect x="3.1" y="6" width="6.4" height="7.8" rx="0.9" fill="#c2c5cb"/><rect x="4.6" y="3.5" width="7.7" height="9" rx="1.6" fill="#f7f8fa"/><rect x="6.25" y="4.75" width="4.75" height="6.5" rx="1.1" fill="#fff" stroke="#5c6168" stroke-width="1.3"/></svg></div>
<div style="position:absolute;left:802px;top:419.33px"><svg width="16" height="16" viewBox="0 0 16 16"><rect x="6.6" y="4.5" width="2.3" height="0.9" rx="0.3" fill="#ff3d3d"/><path d="M4.6 5.6 Q4.6 5.1 5.1 5.1 L10.5 5.1 Q11 5.1 11 5.6 L11 6.4 L4.6 6.4 Z" fill="#ff3d3d"/><path d="M4.9 6.7 L10.7 6.7 L10.4 12.4 Q10.3 12.9 9.8 12.9 L5.8 12.9 Q5.3 12.9 5.2 12.4 Z" fill="#ff3d3d"/></svg></div>
<div style="position:absolute;left:781px;top:119.9px;width:23.3px;height:288.1px;box-sizing:border-box;border:2.2px solid #ff0000;border-radius:1.5px"></div>
<svg style="position:absolute;left:0;top:0" width="850" height="442" viewBox="0 0 850 442"><path d="M685.4 283.3 L777 238.3" stroke="#ff0000" stroke-width="1.6" fill="none"/><path d="M784.3 234.8 L775.5 235.2 L778.6 241.4 Z" fill="#ff0000"/><path d="M687.1 381.3 L779 335.3" stroke="#ff0000" stroke-width="1.6" fill="none"/><path d="M786 331.6 L777.2 332 L780.3 338.2 Z" fill="#ff0000"/></svg>
</body></html>
